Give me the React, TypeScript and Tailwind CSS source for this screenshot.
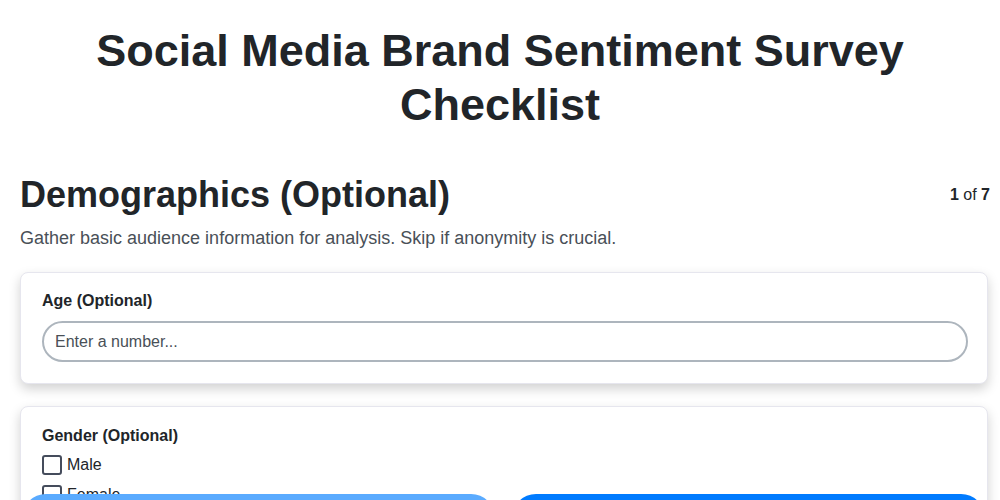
import { useState } from 'react'

const font = { fontFamily: '"Liberation Sans", Arial, sans-serif' }

export default function App() {
  const [age, setAge] = useState('')
  const [genders, setGenders] = useState<string[]>([])

  const toggle = (g: string) =>
    setGenders((prev) => (prev.includes(g) ? prev.filter((x) => x !== g) : [...prev, g]))

  return (
    <div className="min-h-screen bg-white text-[#212529] pb-24" style={font}>
      <h1 className="pt-[24px] px-5 text-center text-[45px] leading-[54px] font-bold">
        Social Media Brand Sentiment Survey
        <br />
        Checklist
      </h1>

      <section className="mt-[41px] pl-5 pr-[10px]">
        <div className="flex items-center justify-between">
          <h2 className="text-[36px] leading-[44px] font-bold">Demographics (Optional)</h2>
          <div className="text-base">
            <span className="font-bold">1</span> of <span className="font-bold">7</span>
          </div>
        </div>
        <p className="mt-[8px] text-[18px] leading-[26px] text-[#495057]">
          Gather basic audience information for analysis. Skip if anonymity is crucial.
        </p>

        <div className="mt-[21px] space-y-[22px] pr-[2px]">
          {/* Age */}
          <div className="rounded-lg border border-[#e6e6ee] bg-white pl-[21px] pr-[19px] pt-[18px] pb-[21px] shadow-[0_5px_12px_rgba(0,0,0,0.18)]">
            <label className="block text-base leading-[20px] font-bold">Age (Optional)</label>
            <input
              type="number"
              value={age}
              onChange={(e) => setAge(e.target.value)}
              placeholder="Enter a number..."
              className="mt-[10px] block w-full h-[41px] rounded-full border-2 border-[#adb5bd] px-[11px] text-base text-[#212529] placeholder-[#495057] outline-none"
            />
          </div>

          {/* Gender */}
          <div className="rounded-lg border border-[#e6e6ee] bg-white pl-[21px] pr-[19px] pt-[19px] pb-[21px] shadow-[0_5px_12px_rgba(0,0,0,0.18)]">
            <label className="block text-base leading-[20px] font-bold">Gender (Optional)</label>
            <div className="mt-[9px] space-y-[10px]">
              {['Male', 'Female', 'Non-binary', 'Prefer not to say'].map((g) => (
                <label key={g} className="flex items-center gap-[5px] text-base leading-[20px] cursor-pointer">
                  <span
                    onClick={() => toggle(g)}
                    className={`w-[20px] h-[20px] rounded-[3px] border-2 border-[#454c5c] ${genders.includes(g) ? 'bg-[#007bff]' : 'bg-white'}`}
                  />
                  {g}
                </label>
              ))}
            </div>
          </div>
        </div>
      </section>

      {/* Navigation */}
      <div className="fixed bottom-0 left-0 right-0 flex gap-[17px] pl-[22px] pr-[15px] translate-y-[calc(100%-6px)]">
        <button disabled className="flex-1 h-[48px] rounded-[24px] bg-[#5aabff] text-white font-bold text-base">
          Previous
        </button>
        <button className="flex-1 h-[48px] rounded-[24px] bg-[#007bff] text-white font-bold text-base">
          Next
        </button>
      </div>
    </div>
  )
}
